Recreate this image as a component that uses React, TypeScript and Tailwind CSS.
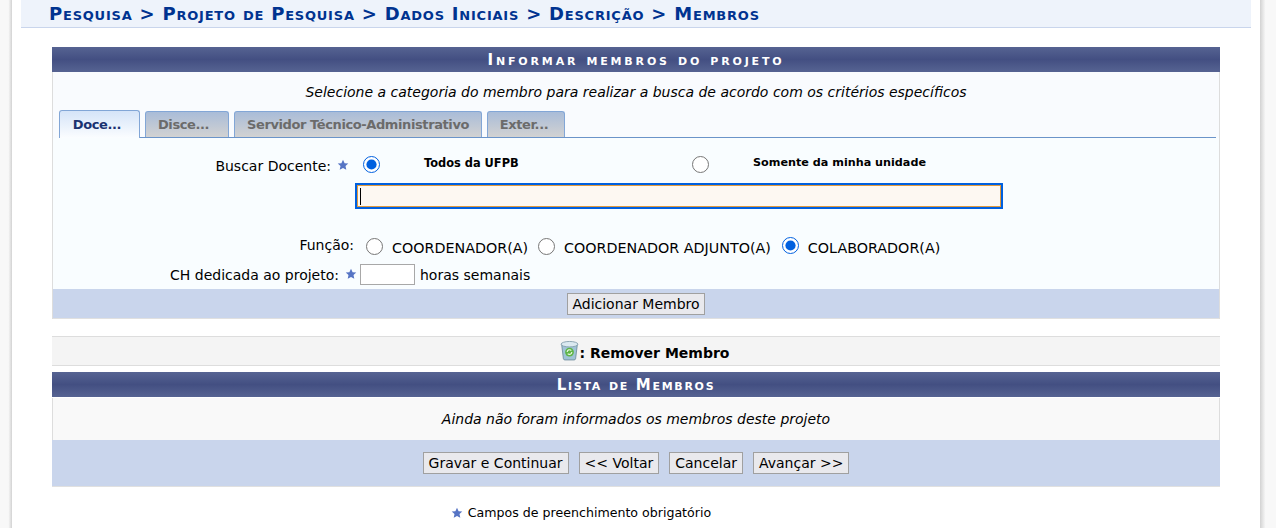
import React from "react";

const FONT = "font-['DejaVu_Sans',Verdana,sans-serif]";

function Star() {
  return (
    <svg width="12" height="12" viewBox="0 0 12 12" className="shrink-0">
      <path
        d="M6 .8l1.600 3.400 3.700.4-2.800 2.500.8 3.700L6 9l-3.300 1.800.8-3.700L.7 4.600l3.700-.4z"
        fill="#5674c4"
      />
    </svg>
  );
}

function Radio({ checked }: { checked?: boolean }) {
  return (
    <input
      type="radio"
      checked={!!checked}
      readOnly
      className="block m-0 w-[17px] h-[17px] shrink-0 accent-[#0060df]"
    />
  );
}

function PanelTitle({ children, tracking }: { children: React.ReactNode; tracking: string }) {
  return (
    <div
      className={`h-[25px] pt-px flex items-center justify-center bg-[linear-gradient(#566392,#434f82_50%,#566392)] text-white text-[15px] font-bold [font-variant:small-caps] ${tracking}`}
    >
      {children}
    </div>
  );
}

function Btn({ children, px = "px-[5px]" }: { children: React.ReactNode; px?: string }) {
  return (
    <button className={`h-[22px] ${px} bg-[#e9e9ed] border border-[#a0a0a0] text-[14px] leading-none text-black`}>
      {children}
    </button>
  );
}

function Tab({ label, active, w, pr = "" }: { label: string; active?: boolean; w: string; pr?: string }) {
  return (
    <div
      className={`${w} ${pr} flex items-center justify-center border border-b-0 border-[#82a6d6] rounded-t-[3px] text-[13px] font-bold tracking-[-0.4px] ${
        active
          ? "h-[28px] -mb-px bg-[linear-gradient(#d5e4f8,#fbfdff)] text-[#1a3270]"
          : "h-[26px] pt-px bg-[linear-gradient(#a9bcd8,#d2d2d2)] text-[#6b6b6b]"
      }`}
    >
      {label}
    </div>
  );
}

export default function App() {
  return (
    <div className={`${FONT} h-[528px] overflow-hidden bg-white flex text-black`}>
      {/* page shadow, left */}
      <div className="w-[12px] shrink-0 bg-[linear-gradient(90deg,#f8f8f8_70%,#d2d2d2)]" />
      <div className="flex-1 min-w-0 pl-[9px] pr-[9px]">
        <div className="h-[28px] bg-[#eef3fb] border-b border-[#c9d5ec] pl-[28px] flex items-center text-[#003390] text-[18px] font-bold [font-variant:small-caps] tracking-[0.78px] whitespace-nowrap">
          Pesquisa &gt; Projeto de Pesquisa &gt; Dados Iniciais &gt; Descrição &gt; Membros
        </div>

        <div className="ml-[31px] w-[1168px] mt-[19px]">
          <PanelTitle tracking="tracking-[2.85px]">Informar membros do projeto</PanelTitle>
          <div className="border-x border-[#dddddd] bg-[#f9fbfe]">
            <div className="h-[38px] pt-[2px] flex items-center justify-center text-[14px] italic">
              Selecione a categoria do membro para realizar a busca de acordo com os critérios específicos
            </div>
            <div className="ml-[6px] mr-[3px] h-[28px] flex items-end gap-[5px] border-b border-[#6b94c9]">
              <Tab label="Doce..." active w="w-[81px]" pr="pr-[5px]" />
              <Tab label="Disce..." w="w-[84px]" pr="pr-[7px]" />
              <Tab label="Servidor Técnico-Administrativo" w="w-[248px]" />
              <Tab label="Exter..." w="w-[78px]" pr="pr-[4px]" />
            </div>
            <div className="bg-[#f9fdff] h-[151px] flex flex-col">
              <div className="mt-[17px] h-[18px] flex items-center">
                <span className="w-[278px] text-right text-[14px] mt-[4px]">Buscar Docente:</span>
                <span className="ml-[6px] flex mt-[2px]"><Star /></span>
                <span className="ml-[14px] flex"><Radio checked /></span>
                <span className="ml-[44px] w-[268px] text-[11.4px] font-bold -mt-[1px]">Todos da UFPB</span>
                <Radio />
                <span className="ml-[44px] text-[11.2px] font-bold -mt-[1px]">Somente da minha unidade</span>
              </div>
              <div className="mt-[10px] ml-[302px] w-[648px] h-[26px] border-2 border-[#0060df] bg-[#fdf8f2] outline outline-1 -outline-offset-3 outline-[#e09a3e] flex items-center pl-[3px]">
                <span className="w-px h-[17px] bg-black" />
              </div>
              <div className="mt-[28px] h-[20px] flex items-center text-[14.3px]">
                <span className="w-[301px] text-right text-[14px] -mt-[3px]">Função:</span>
                <span className="ml-[12px] flex -mt-[1px]"><Radio /></span>
                <span className="ml-[9px] mt-[4px]">COORDENADOR(A)</span>
                <span className="ml-[10px] flex -mt-[1px]"><Radio /></span>
                <span className="ml-[9px] mt-[4px]">COORDENADOR ADJUNTO(A)</span>
                <span className="ml-[11px] flex -mt-[3px]"><Radio checked /></span>
                <span className="ml-[9px] mt-[4px]">COLABORADOR(A)</span>
              </div>
              <div className="mt-[6px] h-[22px] flex items-center text-[14px]">
                <span className="w-[286px] text-right mt-[3px]">CH dedicada ao projeto:</span>
                <span className="ml-[6px] flex"><Star /></span>
                <span className="ml-[3px] w-[55px] h-[21px] bg-white border border-[#a8a8a8]" />
                <span className="ml-[5px] mt-[3px]">horas semanais</span>
              </div>
            </div>
            <div className="h-[30px] bg-[#c9d5ec] border-b border-[#e0e0e0] flex justify-center pt-[4px]">
              <Btn px="px-[4.5px]">Adicionar Membro</Btn>
            </div>
          </div>

          <div className="mt-[17px] h-[30px] pl-[16px] bg-[#f4f4f4] border-y border-[#dddddd] flex items-center justify-center text-[14px] font-bold">
            <svg width="21" height="21" viewBox="0 0 20 20" className="-mt-[1px]">
              <path d="M2.500 4h15l-1.700 14a1.500 1.500 0 0 1-1.500 1H5.700a1.500 1.500 0 0 1-1.500-1z" fill="#9fc3d6" stroke="#6d8c9b" strokeWidth="0.8" />
              <ellipse cx="10" cy="4" rx="8" ry="2.600" fill="#dbe9f0" stroke="#7d9aa8" strokeWidth="0.8" />
              <circle cx="10" cy="11.500" r="4.200" fill="#5fb548" />
              <path d="M7.800 11.500a2.200 2.200 0 0 1 3.900-1.400M12.200 11.500a2.200 2.200 0 0 1-3.900 1.400" stroke="#e8f6e0" strokeWidth="1.100" fill="none" />
            </svg>
            <span className="mt-[5px]">: Remover Membro</span>
          </div>

          <div className="mt-[6px]">
            <PanelTitle tracking="tracking-[1.7px]">Lista de Membros</PanelTitle>
          </div>
          <div className="mt-px h-[42px] bg-[#f9f9f9] border-x border-[#dddddd] flex items-center justify-center text-[14px] italic">
            Ainda não foram informados os membros deste projeto
          </div>
          <div className="h-[47px] bg-[#c9d5ec] border-b border-[#e0e0e0] flex items-center justify-center gap-[10px]">
            <Btn>Gravar e Continuar</Btn>
            <Btn>&lt;&lt; Voltar</Btn>
            <Btn>Cancelar</Btn>
            <Btn>Avançar &gt;&gt;</Btn>
          </div>

          <div className="mt-[18px] h-[16px] flex items-center justify-center gap-[5px] text-[12.6px] pr-[110px]">
            <Star />
            <span>Campos de preenchimento obrigatório</span>
          </div>
        </div>
      </div>
      {/* page shadow, right */}
      <div className="w-[16px] shrink-0 bg-[linear-gradient(90deg,#d2d2d2,#f8f8f8_35%)]" />
    </div>
  );
}
